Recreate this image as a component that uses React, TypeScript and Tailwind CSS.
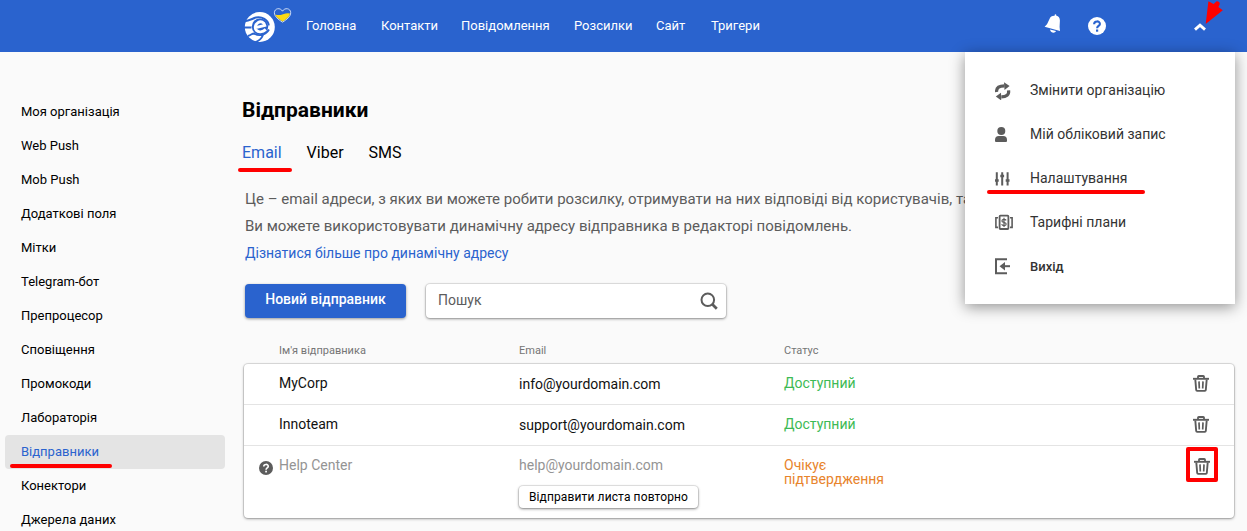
import React from 'react';

const NAV = [
  { label: 'Головна', cls: 'w-[75px]' },
  { label: 'Контакти', cls: 'w-[80px]' },
  { label: 'Повідомлення', cls: 'w-[113px]' },
  { label: 'Розсилки', cls: 'w-[82px]' },
  { label: 'Сайт', cls: 'w-[55px]' },
  { label: 'Тригери', cls: 'w-[60px]' },
];

const SIDEBAR = [
  'Моя організація',
  'Web Push',
  'Mob Push',
  'Додаткові поля',
  'Мітки',
  'Telegram-бот',
  'Препроцесор',
  'Сповіщення',
  'Промокоди',
  'Лабораторія',
  'Відправники',
  'Конектори',
  'Джерела даних',
];

function Logo() {
  return (
    <svg className="h-[38px] w-[50px] shrink-0" viewBox="0 0 50 38">
      <circle cx="16.8" cy="22" r="15" fill="#fff" />
      <path d="M0.5 16.5 C8 15.5 9 13.5 13 12.6 C19 11.5 25 14.5 25.8 20.5" fill="none" stroke="#2a63ce" strokeWidth="2" />
      <path d="M0.5 22.5 H8.5 M5 31 C9 29.5 9 28.5 11 28.5 C17 32 23 29.5 26 24.5 M11.5 37.5 C16 36 18.5 34 20 30" fill="none" stroke="#2a63ce" strokeWidth="1.9" />
      <circle cx="17" cy="21.6" r="8.2" fill="#2a63ce" />
      <path d="M12.6 22.6 L21.8 20.4 C21.2 17.2 17.8 16 15.2 17.5 C12.2 19.3 11.4 23 13.3 25.3 C15.3 27.6 19.6 27.4 22.8 24.4" fill="none" stroke="#fff" strokeWidth="2.9" />
      <path d="M39.5 17.2 C35 14.3 31.4 11.5 31.4 7.7 C31.4 3.2 37.3 2.2 39.5 6.2 C41.7 2.2 47.7 3.2 47.7 7.7 C47.7 11.5 44 14.3 39.5 17.2 Z" fill="#2a63ce" stroke="#dfe8f7" strokeWidth="0.9" />
      <path d="M32.2 9.6 Q36 10.8 40 9.2 T47 8.4 C46.5 11.8 43 14.3 39.5 16.6 C36 14.4 33.2 12.4 32.2 9.6 Z" fill="#fbd914" />
    </svg>
  );
}

function HelpIcon({ className, fill, mark }: { className: string; fill: string; mark: string }) {
  return (
    <svg className={className} viewBox="0 0 18 18">
      <circle cx="9" cy="9" r="9" fill={fill} />
      <path d="M6.1 7.2 C6.1 3.5 11.9 3.6 11.9 6.9 C11.9 8.9 9.1 9 9.1 11.2" fill="none" stroke={mark} strokeWidth="2.1" />
      <rect x="8" y="12.5" width="2.2" height="2.2" fill={mark} />
    </svg>
  );
}

function Trash() {
  return (
    <svg className="h-[17px] w-4 shrink-0" viewBox="0 0 16 17" fill="none" stroke="#5c5c5c">
      <path d="M0 3.8 H16" strokeWidth="1.9" />
      <path d="M5 3.7 V1.6 Q5 1 5.8 1 H10.2 Q11 1 11 1.6 V3.7" strokeWidth="1.8" />
      <path d="M2.3 4.5 L3.2 15 Q3.3 15.9 4.1 15.9 H11.9 Q12.7 15.9 12.8 15 L13.7 4.5" strokeWidth="1.9" />
      <path d="M6 6.4 L6.3 13.5 M10 6.4 L9.7 13.5" strokeWidth="1.7" />
    </svg>
  );
}

const MENU = [
  {
    label: 'Змінити організацію',
    icon: (
      <svg className="h-[18px] w-[18px]" viewBox="0 0 18 18">
        <path d="M1.6 10 C1.2 5.4 4.5 3.8 9.5 3.8" fill="none" stroke="#5c5c5c" strokeWidth="3.2" />
        <path d="M9 0.2 L14.6 4 L9.5 8 Z" fill="#5c5c5c" />
        <path d="M13.6 8.4 C14.2 12.8 11.4 14.8 6.3 14.8" fill="none" stroke="#5c5c5c" strokeWidth="3.2" />
        <path d="M6.2 18.4 L0.8 14.6 L6 10.8 Z" fill="#5c5c5c" />
      </svg>
    ),
  },
  {
    label: 'Мій обліковий запис',
    icon: (
      <svg className="h-[18px] w-[18px]" viewBox="0 0 18 18" fill="#5c5c5c">
        <circle cx="6.3" cy="5" r="4" />
        <path d="M0 14 Q0 10 3.8 10 H8.2 Q12 10 12 14 V15 Q12 16 11 16 H1 Q0 16 0 15 Z" />
      </svg>
    ),
  },
  {
    label: 'Налаштування',
    icon: (
      <svg className="h-[18px] w-[18px]" viewBox="0 0 18 18" stroke="#5c5c5c" fill="none">
        <path d="M1.8 2.2 V15.4 M7.2 2.2 V15.4 M12.6 2.2 V15.4" strokeWidth="2" />
        <path d="M0 10.5 H3.7 M5.3 6 H9.1 M10.7 10.5 H14.5" strokeWidth="2.4" />
      </svg>
    ),
  },
  {
    label: 'Тарифні плани',
    icon: (
      <svg className="h-[18px] w-[18px]" viewBox="0 0 18 18" stroke="#5c5c5c" fill="none">
        <rect x="4.6" y="1.6" width="8.8" height="13.4" rx="0.8" strokeWidth="1.8" />
        <path d="M3 3.8 H0.9 V13.4 H3 M15 3.8 H17.1 V13.4 H15" strokeWidth="1.6" />
        <path d="M11.2 6.4 C10 4.7 6.9 5.2 6.9 6.9 C6.9 8.7 11.2 8 11.2 10 C11.2 11.9 7.7 12.1 6.6 10.3 M9 3.8 V13" strokeWidth="1.2" />
      </svg>
    ),
  },
  {
    label: 'Вихід',
    icon: (
      <svg className="h-[18px] w-[18px]" viewBox="0 0 18 18" stroke="#5c5c5c" fill="none">
        <path d="M12 1.2 H1 V15.2 H12" strokeWidth="2" />
        <path d="M8 8.2 H15" strokeWidth="2" />
        <path d="M4.5 8.2 L10 4 V12.4 Z" fill="#5c5c5c" stroke="none" />
      </svg>
    ),
  },
];

export default function App() {
  return (
    <div className="relative flex h-[531px] w-[1247px] flex-col overflow-hidden bg-[#fafafa] font-['Roboto',sans-serif] text-black">
      <header className="flex h-[52px] shrink-0 items-center bg-[#2a63ce] pl-[243px] text-white">
        <div className="flex h-full w-[63px] shrink-0 items-start pt-[5px]">
          <Logo />
        </div>
        <nav className="flex text-[13px] leading-[18px]">
          {NAV.map((n) => (
            <span key={n.label} className={`${n.cls} shrink-0 whitespace-nowrap`}>{n.label}</span>
          ))}
        </nav>
        <svg className="-mt-1 ml-[273px] h-5 w-[18px] shrink-0" viewBox="0 0 18 20" fill="#fff">
          <path d="M10.8 0.4 L12 0.2 L12.4 1.8 C14.6 2.3 15.9 4 15.9 6.5 L15.6 13 L16 17 L0.6 12.8 L3 10.2 L5.5 5 C6.4 2.7 8 1.6 10.6 1.7 Z" />
          <path d="M6 15.5 L12 17.1 C10.9 19.8 6.8 19.4 6 15.5 Z" />
        </svg>
        <HelpIcon className="ml-[26px] h-[18px] w-[18px] shrink-0" fill="#fff" mark="#2a63ce" />
        <svg className="ml-[88px] mt-px h-2 w-3 shrink-0" viewBox="0 0 12 8">
          <path d="M1 6.6 L6 2.2 L11 6.6" fill="none" stroke="#fff" strokeWidth="2.9" />
        </svg>
      </header>

      <div className="flex min-h-0 flex-1">
        <aside className="w-[230px] shrink-0 px-[5px] pt-[43px]">
          {SIDEBAR.map((s) => (
            <div
              key={s}
              className={
                s === 'Відправники'
                  ? 'flex h-[34px] items-center rounded bg-[#e4e4e4] pl-4 text-[13px] text-[#2a63ce]'
                  : 'flex h-[34px] items-center pl-4 text-[13px]'
              }
            >
              {s}
            </div>
          ))}
        </aside>

        <main className="w-[1005px] shrink-0 pl-3.5">
          <h1 className="-ml-0.5 pt-[46px] text-[21px] font-bold leading-6">Відправники</h1>
          <div className="-ml-0.5 mt-5 flex gap-[25px] text-[16px] leading-[22px]">
            <span className="text-[#2a63ce]">Email</span>
            <span>Viber</span>
            <span>SMS</span>
          </div>
          <div className="mt-[22px] whitespace-nowrap pl-px text-[15px] leading-[27px] text-[#5c5c5c]">
            <p>Це – email адреси, з яких ви можете робити розсилку, отримувати на них відповіді від користувачів, так</p>
            <p>Ви можете використовувати динамічну адресу відправника в редакторі повідомлень.</p>
            <p className="text-[14px] text-[#2a63ce]">Дізнатися більше про динамічну адресу</p>
          </div>
          <div className="mt-[17px] flex h-[34px] gap-5 pl-px">
            <button className="h-[34px] w-[161px] rounded bg-[#2a63ce] pb-1 text-[14px] font-medium text-white shadow-[0_1px_3px_rgba(0,0,0,0.4)]">
              Новий відправник
            </button>
            <div className="flex h-[34px] w-[300px] items-center justify-between rounded bg-white pb-px pl-3 pr-2 text-[14px] text-[#5c5c5c] shadow-[0_0_0_1px_rgba(0,0,0,0.08),0_1px_3px_rgba(0,0,0,0.4)]">
              <span>Пошук</span>
              <svg className="h-[18px] w-[18px]" viewBox="0 0 18 18" fill="none" stroke="#5c5c5c">
                <circle cx="7.8" cy="7.8" r="6.3" strokeWidth="2" />
                <path d="M12.3 12.3 L16.8 16.8" strokeWidth="2.7" />
              </svg>
            </div>
          </div>

          <div className="mt-[26px] flex h-5 pl-[35px] text-[11px] leading-[14px] text-[#757575]">
            <span className="w-[240px]">Ім'я відправника</span>
            <span className="w-[265px]">Email</span>
            <span>Статус</span>
          </div>
          <div className="h-[154px] w-[990px] rounded bg-white text-[14px] leading-5 text-[#111] shadow-[0_0_0_1px_rgba(0,0,0,0.1),0_1px_3px_rgba(0,0,0,0.35)]">
            <div className="flex h-[41px] border-b border-[#e4e4e4] pl-[35px] pt-[9px]">
              <span className="w-[240px]">MyCorp</span>
              <span className="w-[265px] pt-px">info@yourdomain.com</span>
              <span className="w-[409px] text-[#3dba55]">Доступний</span>
              <span className="pt-0.5"><Trash /></span>
            </div>
            <div className="flex h-[41px] border-b border-[#e4e4e4] pl-[35px] pt-[9px]">
              <span className="w-[240px]">Innoteam</span>
              <span className="w-[265px] pt-px">support@yourdomain.com</span>
              <span className="w-[409px] text-[#3dba55]">Доступний</span>
              <span className="pt-0.5"><Trash /></span>
            </div>
            <div className="flex pl-[15px] pt-[9px] text-[#949494]">
              <span className="w-5 pt-1.5"><HelpIcon className="h-3.5 w-3.5" fill="#5c5c5c" mark="#fff" /></span>
              <span className="w-[240px]">Help Center</span>
              <div className="flex w-[265px] flex-col items-start">
                <span>help@yourdomain.com</span>
                <button className="mt-[11px] h-[22px] w-[179px] whitespace-nowrap rounded bg-white text-[12px] leading-[22px] tracking-[0.12px] text-black shadow-[0_0_0_1px_rgba(0,0,0,0.08),0_1px_3px_rgba(0,0,0,0.45)]">
                  Відправити листа повторно
                </button>
              </div>
              <span className="w-[410px] pt-[3px] leading-[14px] text-[#e8842c]">Очікує<br />підтвердження</span>
              <span className="pt-[3px]"><Trash /></span>
            </div>
          </div>
        </main>
      </div>

      <div className="absolute left-[965px] top-[52px] h-[252px] w-[270px] bg-white pt-4 text-[14px] text-[#333] shadow-[0_3px_14px_rgba(0,0,0,0.42)]">
        {MENU.map((m) => (
          <div key={m.label} className="flex h-11 items-center pl-[30px]">
            <span className="w-[35px] shrink-0 pt-0.5">{m.icon}</span>
            <span className={m.label === 'Вихід' ? 'pt-px text-[13px] font-medium' : ''}>{m.label}</span>
          </div>
        ))}
      </div>

      <div className="absolute left-[10px] top-[464px] h-1 w-[102px] rounded-full bg-[#f00]" />
      <div className="absolute left-[238px] top-[168px] h-1 w-[54px] rounded-full bg-[#f00]" />
      <div className="absolute left-[987px] top-[190px] h-1 w-[158px] rounded-full bg-[#f00]" />
      <div className="absolute left-[1186px] top-[447px] h-[35px] w-8 rounded-xs border-4 border-[#f00]" />
      <svg className="absolute left-[1200px] top-0 h-[26px] w-[26px]" viewBox="0 0 26 26" fill="#f00">
        <path d="M5.7 24 L8.4 1.2 L13.6 4 L16.6 1.2 Q19.6 1 19.8 4 L18.4 7 L22.8 10.2 Z" />
      </svg>
    </div>
  );
}
